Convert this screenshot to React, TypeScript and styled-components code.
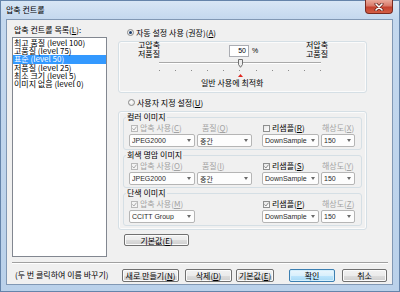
import React from 'react';
import styled, { createGlobalStyle } from 'styled-components';

const GlobalStyle = createGlobalStyle`
  html, body {
    margin: 0;
    padding: 0;
    background: #ffffff;
  }
  body {
    font-family: "Noto Sans CJK KR", "Noto Sans", sans-serif;
    font-size: 8px;
    color: #000;
  }
  * {
    box-sizing: border-box;
  }
`;

const Window = styled.div`
  width: 400px;
  height: 292px;
  display: flex;
  flex-direction: column;
  border: 1px solid #6584aa;
  background: linear-gradient(180deg, #d8e6f5 0px, #c4d8ee 18px, #bad1ea 100%);
`;

const TitleBar = styled.div`
  height: 18px;
  display: flex;
  align-items: flex-start;
  padding-left: 5px;
`;

const Title = styled.span`
  line-height: 18px;
`;

const CloseButton = styled.div`
  margin: -1px 6px 0 auto;
  width: 28px;
  height: 14px;
  border: 1px solid #7a2a20;
  border-top: none;
  border-radius: 0 0 4px 4px;
  background: linear-gradient(180deg, #eaaa9c 0%, #d97a6a 45%, #c4412f 55%, #d35e45 100%);
  display: flex;
  align-items: center;
  justify-content: center;
`;

const Client = styled.div`
  flex: 1;
  margin: 0 6px 6px 5px;
  border: 1px solid #8198b4;
  background: #f0f0f0;
  display: flex;
  flex-direction: column;
`;

const Main = styled.div`
  display: flex;
  padding: 5px 0 0 5px;
`;

const LeftColumn = styled.div`
  width: 95px;
  display: flex;
  flex-direction: column;
`;

const ListLabel = styled.div`
  line-height: 10px;
  padding-left: 2px;
`;

const ListBox = styled.div`
  margin-top: 2px;
  height: 220px;
  border: 1px solid #828790;
  background: #ffffff;
  padding-top: 1px;
`;

const ListItem = styled.div<{ $selected?: boolean }>`
  height: 8.2px;
  line-height: 8.2px;
  padding-left: 1px;
  white-space: nowrap;
  background: ${p => (p.$selected ? '#3399ff' : 'transparent')};
  color: ${p => (p.$selected ? '#ffffff' : '#000000')};
`;

const RightColumn = styled.div`
  margin-left: 11px;
  width: 249px;
  display: flex;
  flex-direction: column;
`;

const RadioRow = styled.div<{ $top: number; $indent: number }>`
  display: flex;
  align-items: center;
  height: 10px;
  margin-top: ${p => p.$top}px;
  padding-left: ${p => p.$indent}px;
  gap: 2px;
  white-space: nowrap;
`;

const Radio = styled.span<{ $checked?: boolean }>`
  width: 7px;
  height: 7px;
  flex: none;
  border-radius: 50%;
  border: 1px solid #8a8a8a;
  background: radial-gradient(circle at 40% 40%, #ffffff 0%, #dcdcdc 100%);
  display: inline-flex;
  align-items: center;
  justify-content: center;
  &::after {
    content: '';
    width: 3px;
    height: 3px;
    border-radius: 50%;
    background: ${p => (p.$checked ? '#1b3c6b' : 'transparent')};
  }
`;

const Key = styled.span`
  text-decoration: underline;
`;

const GroupBox = styled.div`
  border: 1px solid #d5dfe5;
  border-radius: 3px;
  box-shadow: inset 0 0 0 1px #fbfbfb;
`;

const AutoGroup = styled(GroupBox)`
  margin-top: 4px;
  height: 52px;
  display: flex;
  flex-direction: column;
`;

const ScaleRow = styled.div`
  display: flex;
  align-items: flex-start;
  height: 17px;
  margin-top: -1px;
`;

const LevelLabel = styled.div<{ $side: 'left' | 'right' }>`
  line-height: 8.5px;
  white-space: nowrap;
  width: ${p => (p.$side === 'left' ? '20px' : 'auto')};
  margin-left: ${p => (p.$side === 'left' ? '19px' : 'auto')};
  margin-right: ${p => (p.$side === 'left' ? '0' : '38px')};
`;

const ValueBox = styled.div`
  margin: 4px 0 0 71px;
  width: 20px;
  height: 12px;
  border: 1px solid #abadb3;
  background: #ffffff;
  text-align: right;
  padding-right: 2px;
  line-height: 10px;
  font-family: "Liberation Sans", sans-serif;
  font-size: 7px;
`;

const Percent = styled.span`
  margin: 4px 0 0 3px;
  line-height: 12px;
  font-family: "Liberation Sans", sans-serif;
  font-size: 7px;
`;

const Scale = styled.div`
  position: relative;
  margin-left: 40px;
  width: 162px;
  display: flex;
  flex-direction: column;
`;

const Track = styled.div`
  margin-top: 4px;
  height: 2px;
  background: linear-gradient(180deg, #a9a9a9 50%, #ffffff 50%);
`;

const Thumb = styled.svg`
  position: absolute;
  top: 1px;
`;

const Ticks = styled.div`
  margin-top: 6px;
  height: 1px;
  display: flex;
  justify-content: space-between;
`;

const Tick = styled.span`
  width: 1px;
  height: 1px;
  background: #8c8c8c;
`;

const Marker = styled.svg`
  position: absolute;
  top: 16px;
`;

const Caption = styled.div`
  margin: 7px 0 0 82px;
  line-height: 10px;
  white-space: nowrap;
`;

const CustomGroup = styled(GroupBox)`
  margin-top: 4px;
  padding: 0 4px 3px;
`;

const ImageGroup = styled.fieldset`
  margin: 0;
  padding: 0 0 2px 5px;
  min-width: 0;
  border: 1px solid #d5dfe5;
  border-radius: 3px;
`;

const Legend = styled.legend`
  margin-left: -3px;
  padding: 0 1px;
  line-height: 10px;
  white-space: nowrap;
`;

const FieldGrid = styled.div`
  display: grid;
  grid-template-columns: 66px 63px 57px 34px;
  grid-template-rows: 10px 13px;
  column-gap: 2px;
  row-gap: 1px;
  margin-top: 1px;
`;

const CheckLabel = styled.div<{ $indent: number; $disabled?: boolean }>`
  display: flex;
  align-items: center;
  gap: 2px;
  padding-left: ${p => p.$indent}px;
  line-height: 10px;
  white-space: nowrap;
  color: ${p => (p.$disabled ? '#a3a3a3' : '#000000')};
`;

const CheckBox = styled.span<{ $disabled?: boolean }>`
  width: 7px;
  height: 7px;
  flex: none;
  border: 1px solid ${p => (p.$disabled ? '#b9b9b9' : '#8e8f8f')};
  background: ${p => (p.$disabled ? '#f4f4f4' : 'linear-gradient(135deg, #e6e6e6, #ffffff)')};
  display: inline-flex;
  align-items: center;
  justify-content: center;
`;

const FieldLabel = styled.div<{ $indent: number }>`
  padding-left: ${p => p.$indent}px;
  line-height: 10px;
  white-space: nowrap;
  color: #a3a3a3;
`;

const Combo = styled.div<{ $width: number }>`
  width: ${p => p.$width}px;
  height: 13px;
  border: 1px solid #b5b5b5;
  border-radius: 2px;
  background: #fdfdfd;
  display: flex;
  align-items: center;
  padding: 0 3px 0 2px;
  font-family: "Liberation Sans", "Noto Sans CJK KR", sans-serif;
  font-size: 7px;
  color: #2a2a2a;
  white-space: nowrap;
`;

const ComboText = styled.span`
  flex: 1;
  overflow: hidden;
`;

const Arrow = styled.span`
  flex: none;
  width: 0;
  height: 0;
  border-left: 2.5px solid transparent;
  border-right: 2.5px solid transparent;
  border-top: 3px solid #6a6a6a;
`;

const Button = styled.div<{ $width: number; $gap?: number; $default?: boolean }>`
  width: ${p => p.$width}px;
  height: 13px;
  margin-left: ${p => (p.$gap === undefined ? 0 : p.$gap)}px;
  border: 1px solid ${p => (p.$default ? '#3c7fb1' : '#707070')};
  border-radius: 2px;
  box-shadow: inset 0 0 0 1px ${p => (p.$default ? '#d5effc' : '#fbfbfb')};
  background: ${p =>
    p.$default
      ? 'linear-gradient(180deg, #eaf6fd 0%, #d9f0fc 50%, #bee6fd 50%, #a7d9f5 100%)'
      : 'linear-gradient(180deg, #f2f2f2 0%, #ebebeb 50%, #dddddd 50%, #cfcfcf 100%)'};
  display: flex;
  align-items: center;
  justify-content: center;
  line-height: 11px;
  white-space: nowrap;
`;

const DefaultsButton = styled(Button)`
  margin: 4px 0 0 6px;
  height: 12px;
`;

const Separator = styled.div`
  margin: 5px 4px 0 5px;
  height: 2px;
  border-top: 1px solid #a0a0a0;
  border-bottom: 1px solid #ffffff;
`;

const BottomRow = styled.div`
  display: flex;
  align-items: center;
  margin-top: 5px;
  height: 13px;
  padding: 0 5px 0 8px;
`;

const Hint = styled.span`
  margin-top: -2px;
  margin-right: auto;
  white-space: nowrap;
`;

const Acc = ({ text, k }: { text: string; k: string }) => (
  <>
    {text}(<Key>{k}</Key>)
  </>
);

const Check = ({ color }: { color: string }) => (
  <svg width="5" height="5" viewBox="0 0 5 5">
    <path d="M0.4 2.4 L1.9 4 L4.6 0.6" fill="none" stroke={color} strokeWidth="1" />
  </svg>
);

interface ImageSettings {
  title: string;
  compKey: string;
  codec: string;
  qualityKey?: string;
  resampleKey: string;
  resampled: boolean;
  resKey: string;
}

const imageGroups: ImageSettings[] = [
  { title: '컬러 이미지', compKey: 'C', codec: 'JPEG2000', qualityKey: 'Q', resampleKey: 'R', resampled: false, resKey: 'X' },
  { title: '회색 명암 이미지', compKey: 'O', codec: 'JPEG2000', qualityKey: 'I', resampleKey: 'S', resampled: true, resKey: 'Y' },
  { title: '단색 이미지', compKey: 'M', codec: 'CCITT Group', resampleKey: 'P', resampled: true, resKey: 'Z' },
];

const presets = [
  '최고 품질 (level 100)',
  '고품질 (level 75)',
  '표준 (level 50)',
  '저품질 (level 25)',
  '최소 크기 (level 5)',
  '이미지 없음 (level 0)',
];

const level = 50;

const App: React.FC = () => {
  return (
    <>
      <GlobalStyle />
      <Window>
        <TitleBar>
          <Title>압축 컨트롤</Title>
          <CloseButton>
            <svg width="10" height="8" viewBox="0 0 10 8">
              <path d="M2 1 L8 7 M8 1 L2 7" stroke="#5a1a14" strokeWidth="3" strokeLinecap="round" />
              <path d="M2 1 L8 7 M8 1 L2 7" stroke="#ffffff" strokeWidth="1.6" strokeLinecap="round" />
            </svg>
          </CloseButton>
        </TitleBar>
        <Client>
          <Main>
            <LeftColumn>
              <ListLabel>
                압축 컨트롤 목록(<Key>L</Key>):
              </ListLabel>
              <ListBox>
                {presets.map((p, i) => (
                  <ListItem key={p} $selected={i === 2}>
                    {p}
                  </ListItem>
                ))}
              </ListBox>
            </LeftColumn>
            <RightColumn>
              <RadioRow $top={2} $indent={9}>
                <Radio $checked />
                <span>
                  자동 설정 사용 (권장)(<Key>A</Key>)
                </span>
              </RadioRow>
              <AutoGroup>
                <ScaleRow>
                  <LevelLabel $side="left">
                    고압축
                    <br />
                    저품질
                  </LevelLabel>
                  <ValueBox>{level}</ValueBox>
                  <Percent>%</Percent>
                  <LevelLabel $side="right">
                    저압축
                    <br />
                    고품질
                  </LevelLabel>
                </ScaleRow>
                <Scale>
                  <Track />
                  <Thumb width="5" height="9" viewBox="0 0 5 9" style={{ left: `calc(${level}% - 2px)` }}>
                    <path d="M0.5 0.5 H4.5 V5.5 L2.5 8.3 L0.5 5.5 Z" fill="#ececec" stroke="#6f6f6f" strokeWidth="1" />
                  </Thumb>
                  <Ticks>
                    {Array.from({ length: 11 }, (_, i) => (
                      <Tick key={i} />
                    ))}
                  </Ticks>
                  <Marker width="5" height="3" viewBox="0 0 5 3" style={{ left: `calc(${level}% - 2px)` }}>
                    <path d="M2.5 0 L5 3 L0 3 Z" fill="#e0261e" />
                  </Marker>
                </Scale>
                <Caption>일반 사용에 최적화</Caption>
              </AutoGroup>
              <RadioRow $top={4} $indent={10}>
                <Radio />
                <span>
                  사용자 지정 설정(<Key>U</Key>)
                </span>
              </RadioRow>
              <CustomGroup>
                {imageGroups.map(g => (
                  <ImageGroup key={g.title}>
                    <Legend>{g.title}</Legend>
                    <FieldGrid>
                      <CheckLabel $indent={2} $disabled>
                        <CheckBox $disabled>
                          <Check color="#a8a8a8" />
                        </CheckBox>
                        <span>
                          <Acc text="압축 사용" k={g.compKey} />
                        </span>
                      </CheckLabel>
                      {g.qualityKey ? (
                        <FieldLabel $indent={5}>
                          <Acc text="품질" k={g.qualityKey} />
                        </FieldLabel>
                      ) : (
                        <span />
                      )}
                      <CheckLabel $indent={1}>
                        <CheckBox>{g.resampled && <Check color="#8a8a8a" />}</CheckBox>
                        <span>
                          <Acc text="리샘플" k={g.resampleKey} />
                        </span>
                      </CheckLabel>
                      <FieldLabel $indent={1}>
                        <Acc text="해상도" k={g.resKey} />
                      </FieldLabel>
                      <Combo $width={66}>
                        <ComboText>{g.codec}</ComboText>
                        <Arrow />
                      </Combo>
                      {g.qualityKey ? (
                        <Combo $width={55}>
                          <ComboText>중간</ComboText>
                          <Arrow />
                        </Combo>
                      ) : (
                        <span />
                      )}
                      <Combo $width={57}>
                        <ComboText>DownSample</ComboText>
                        <Arrow />
                      </Combo>
                      <Combo $width={34}>
                        <ComboText>150</ComboText>
                        <Arrow />
                      </Combo>
                    </FieldGrid>
                  </ImageGroup>
                ))}
              </CustomGroup>
              <DefaultsButton $width={65}>
                기본값(<Key>E</Key>)
              </DefaultsButton>
            </RightColumn>
          </Main>
          <Separator />
          <BottomRow>
            <Hint>(두 번 클릭하여 이름 바꾸기)</Hint>
            <Button $width={57}>
              새로 만들기(<Key>N</Key>)
            </Button>
            <Button $width={47} $gap={6}>
              삭제(<Key>D</Key>)
            </Button>
            <Button $width={38} $gap={4}>
              기본값(<Key>E</Key>)
            </Button>
            <Button $width={46} $gap={15} $default>
              확인
            </Button>
            <Button $width={45} $gap={7}>
              취소
            </Button>
          </BottomRow>
        </Client>
      </Window>
    </>
  );
};

export default App;
